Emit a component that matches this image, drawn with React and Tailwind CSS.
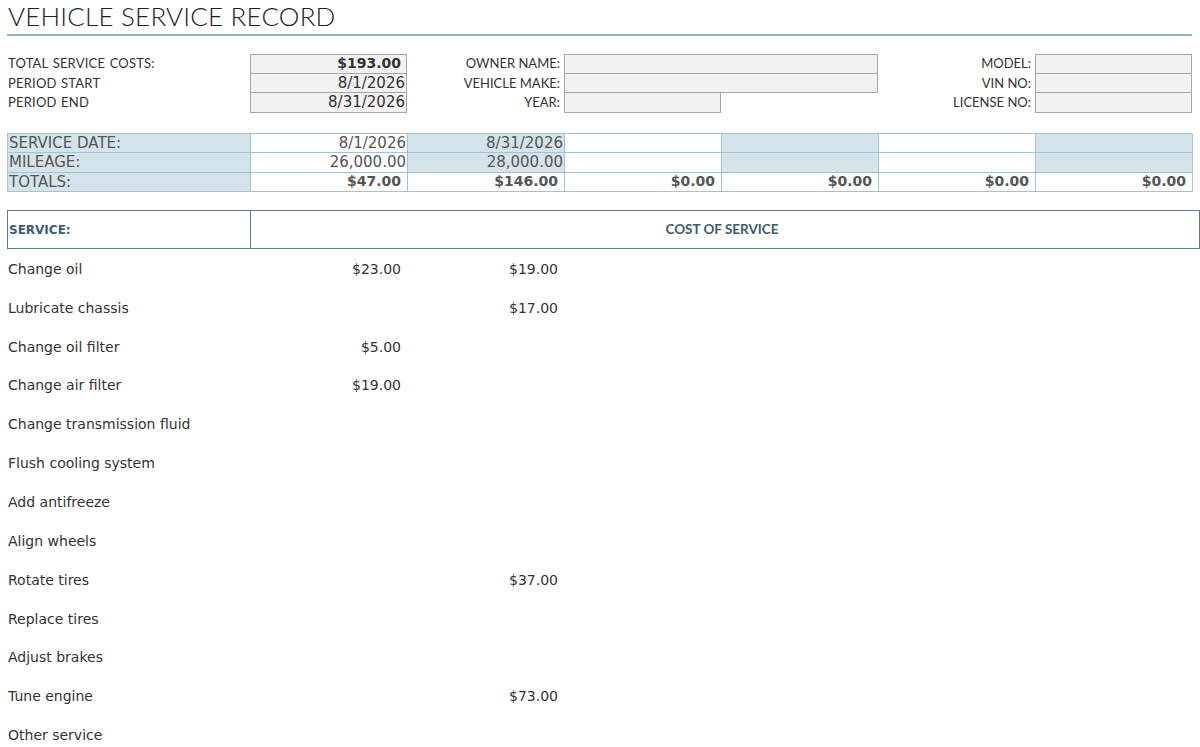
import React from 'react';

const services = [
  ['Change oil', '$23.00', '$19.00'],
  ['Lubricate chassis', '', '$17.00'],
  ['Change oil filter', '$5.00', ''],
  ['Change air filter', '$19.00', ''],
  ['Change transmission fluid', '', ''],
  ['Flush cooling system', '', ''],
  ['Add antifreeze', '', ''],
  ['Align wheels', '', ''],
  ['Rotate tires', '', '$37.00'],
  ['Replace tires', '', ''],
  ['Adjust brakes', '', ''],
  ['Tune engine', '', '$73.00'],
  ['Other service', '', ''],
];

const lato = { fontFamily: 'Lato, "Open Sans", sans-serif' };
const dejavu = { fontFamily: '"DejaVu Sans", Verdana, sans-serif' };

function Label({ children, right }) {
  return (
    <div
      className={`flex items-center text-[13px] text-[#333] ${right ? 'justify-end pr-[4px]' : 'pl-[1px] tracking-[0.2px] [word-spacing:1px]'}`}
      style={lato}
    >
      {children}
    </div>
  );
}

function Box({ children, first, bold, span }) {
  return (
    <div
      className={`flex items-center justify-end bg-[#f2f2f2] border-x border-b border-[#a6a6a6] text-[#333] ${first ? 'border-t' : ''} ${bold ? 'font-bold text-[14px] pr-[5px]' : 'text-[15px] pr-[1px]'} ${span ? 'col-span-2' : ''}`}
      style={dejavu}
    >
      {children}
    </div>
  );
}

export default function App() {
  const blue = 'bg-[#d5e3eb]';
  const cell = 'flex items-center justify-end pr-[1px] border-r border-b border-[#a3c2d4] text-[15px] text-[#555]';

  return (
    <div className="w-[1200px] h-[747px] overflow-hidden bg-white pl-[7px]">
      {/* title */}
      <div className="w-[1185px] h-[36px] border-b-2 border-[#93b3c2] pt-[1px]">
        <h1 className="text-[26px] leading-[31px] text-[#222] pl-[1px] font-light tracking-[0.2px]" style={lato}>
          VEHICLE SERVICE RECORD
        </h1>
      </div>

      {/* summary info */}
      <div className="grid grid-cols-[243px_repeat(6,157px)] auto-rows-[19.5px] mt-[18px]">
        <Label>TOTAL SERVICE COSTS:</Label>
        <Box first bold>$193.00</Box>
        <Label right>OWNER NAME:</Label>
        <Box first span />
        <Label right>MODEL:</Label>
        <Box first />

        <Label>PERIOD START</Label>
        <Box>8/1/2026</Box>
        <Label right>VEHICLE MAKE:</Label>
        <Box span />
        <Label right>VIN NO:</Label>
        <Box />

        <Label>PERIOD END</Label>
        <Box>8/31/2026</Box>
        <Label right>YEAR:</Label>
        <Box />
        <div />
        <Label right>LICENSE NO:</Label>
        <Box />
      </div>

      {/* service dates */}
      <div
        className="grid grid-cols-[243px_repeat(6,157px)] auto-rows-[19.5px] mt-[20px] border-t border-l border-[#a3c2d4] w-[1185px]"
        style={dejavu}
      >
        <div className={`${cell} ${blue} justify-start pl-[1px]`}>SERVICE DATE:</div>
        <div className={cell}>8/1/2026</div>
        <div className={`${cell} ${blue}`}>8/31/2026</div>
        <div className={cell} />
        <div className={`${cell} ${blue}`} />
        <div className={cell} />
        <div className={`${cell} ${blue}`} />

        <div className={`${cell} ${blue} justify-start pl-[1px]`}>MILEAGE:</div>
        <div className={cell}>26,000.00</div>
        <div className={`${cell} ${blue}`}>28,000.00</div>
        <div className={cell} />
        <div className={`${cell} ${blue}`} />
        <div className={cell} />
        <div className={`${cell} ${blue}`} />

        <div className={`${cell} ${blue} justify-start pl-[1px]`}>TOTALS:</div>
        {['$47.00', '$146.00', '$0.00', '$0.00', '$0.00', '$0.00'].map((t, i) => (
          <div key={i} className={`${cell} font-bold !text-[14px] text-[#222] pr-[6px]`}>{t}</div>
        ))}
      </div>

      {/* service header */}
      <div className="grid grid-cols-[243px_942px] h-[39px] mt-[18px] border border-[#5d7b8a]">
        <div className="flex items-center pl-[1px] border-r border-[#5d7b8a] text-[12px] font-bold text-[#3d5e72]" style={dejavu}>
          SERVICE:
        </div>
        <div className="flex items-center justify-center text-[13.5px] font-bold text-[#3f5b6b]" style={lato}>
          COST OF SERVICE
        </div>
      </div>

      {/* services */}
      <div className="flex flex-col pt-[1px]" style={dejavu}>
        {services.map(([name, a, b]) => (
          <div key={name} className="grid grid-cols-[243px_repeat(6,157px)] h-[38.85px] items-center text-[14px] text-[#333]">
            <div className="pl-[1px]">{name}</div>
            <div className="text-right pr-[6px]">{a}</div>
            <div className="text-right pr-[6px]">{b}</div>
          </div>
        ))}
      </div>
    </div>
  );
}
